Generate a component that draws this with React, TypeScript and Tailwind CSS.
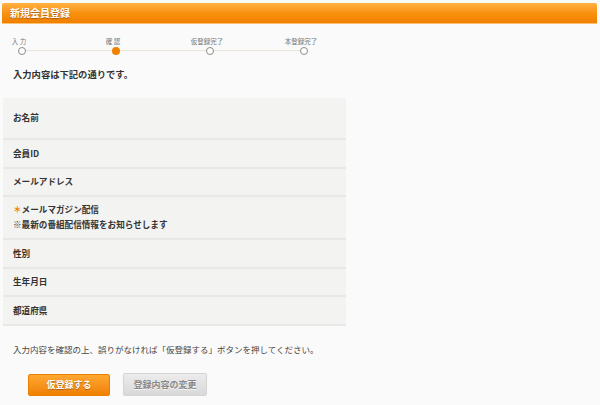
const steps = [
  { label: '入 力', active: false },
  { label: '確 認', active: true },
  { label: '仮登録完了', active: false },
  { label: '本登録完了', active: false },
];

const rows: { label: React.ReactNode; h: string }[] = [
  { label: 'お名前', h: 'h-[42px]' },
  { label: '会員ID', h: 'h-[29px]' },
  { label: 'メールアドレス', h: 'h-[28px]' },
  {
    label: (
      <>
        <div>
          <span className="text-[#f08000]">＊</span>メールマガジン配信
        </div>
        <div className="mt-[3px]">※最新の番組配信情報をお知らせします</div>
      </>
    ),
    h: 'h-[43px]',
  },
  { label: '性別', h: 'h-[29px]' },
  { label: '生年月日', h: 'h-[28px]' },
  { label: '都道府県', h: 'h-[29px]' },
];

function App() {
  return (
    <div
      className="w-[600px] h-[405px] bg-[#fafafa] text-[#333] overflow-hidden"
      style={{ fontFamily: '"Noto Sans CJK JP", "Noto Sans", sans-serif' }}
    >
      {/* Header */}
      <div className="mt-[3px] ml-[2px] mr-[3px] h-[21px] flex items-center pl-[8px] rounded-t-[2px] bg-gradient-to-b from-[#ffb140] via-[#f9920e] to-[#f08000] border-b border-[#ffc070]">
        <span className="text-white font-bold text-[10px] leading-none [text-shadow:0_1px_1px_rgba(120,60,0,0.6)]">
          新規会員登録
        </span>
      </div>

      {/* Steps */}
      <div className="mt-[14px] pl-[3px]">
        <div className="flex gap-[62px]">
          {steps.map((s) => (
            <div key={s.label} className="w-[32px] flex justify-center">
              <span className="whitespace-nowrap text-[6.5px] leading-none text-[#777]">{s.label}</span>
            </div>
          ))}
        </div>
        <div className="flex items-center pl-[15px] mt-[2px]">
          {steps.map((s, i) => (
            <div key={s.label} className="flex items-center">
              <div
                className={
                  s.active
                    ? 'w-[8px] h-[8px] rounded-full bg-[#f08000]'
                    : 'w-[8px] h-[8px] rounded-full border border-[#8a8a8a] bg-white'
                }
              />
              {i < steps.length - 1 && <div className="w-[86px] h-px bg-[#ebe4d6]" />}
            </div>
          ))}
        </div>
      </div>

      {/* Intro */}
      <div className="mt-[15px] pl-[13px] text-[9.3px] font-bold leading-none text-[#333]">
        入力内容は下記の通りです。
      </div>

      {/* Table */}
      <div className="mt-[19px] ml-[3px] w-[343px] bg-[#f3f3f1]">
        {rows.map((r, i) => (
          <div
            key={i}
            className={`${r.h} flex flex-col justify-center pl-[10px] border-b-2 border-[#e8e8e6] text-[8.6px] font-bold leading-[1.35]`}
          >
            {r.label}
          </div>
        ))}
      </div>

      {/* Note */}
      <div className="mt-[19px] pl-[13px] text-[8.5px] leading-none text-[#444]">
        入力内容を確認の上、誤りがなければ「仮登録する」ボタンを押してください。
      </div>

      {/* Buttons */}
      <div className="mt-[20px] flex items-center">
        <button className="ml-[28px] w-[82px] h-[22px] rounded-[2px] bg-gradient-to-b from-[#ffa830] to-[#f08000] border border-[#e88000] text-white font-bold text-[9px] [text-shadow:0_1px_1px_rgba(120,60,0,0.6)]">
          仮登録する
        </button>
        <button className="ml-[13px] w-[84px] h-[23px] rounded-[2px] bg-gradient-to-b from-[#ececec] to-[#d8d8d8] border border-[#d4d4d4] text-[#888] font-bold text-[9px] [text-shadow:0_1px_0_rgba(255,255,255,0.8)]">
          登録内容の変更
        </button>
      </div>
    </div>
  );
}

export default App;
